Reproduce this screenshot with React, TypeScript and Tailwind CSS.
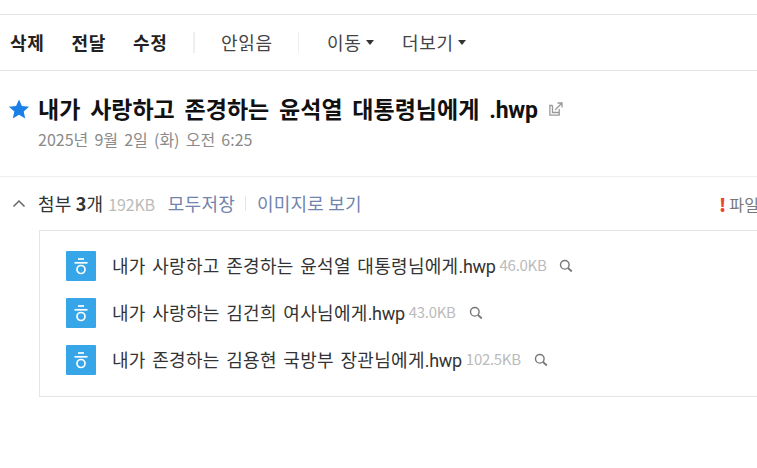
const font = { fontFamily: '"Noto Sans CJK KR", "Noto Sans", sans-serif' };
const latin = { fontFamily: 'Roboto, "Noto Sans", sans-serif' };

function Caret() {
  return <span className="ml-[4px] inline-block h-0 w-0 border-x-[4px] border-t-[5px] border-x-transparent border-t-[#333]" />;
}

function Search() {
  return (
    <svg width="14" height="14" viewBox="0 0 14 14" fill="none" stroke="#777" strokeWidth="1.4" className="block shrink-0">
      <circle cx="5.800" cy="5.800" r="4.300" />
      <path d="M9 9l3.800 3.500" strokeWidth="1.800" />
    </svg>
  );
}

function HwpIcon() {
  return (
    <div className="flex h-[30px] w-[30px] shrink-0 items-center justify-center rounded-[1px] bg-[#36a6e8]">
      <svg width="14" height="17" viewBox="0 0 14 17" fill="none" stroke="#fff" strokeWidth="1.700">
        <path d="M4 1h6" />
        <path d="M.5 4.800h13" />
        <circle cx="7" cy="11.500" r="4" />
      </svg>
    </div>
  );
}

const files = [
  { name: "내가 사랑하고 존경하는 윤석열 대통령님에게", size: "46.0KB" },
  { name: "내가 사랑하는 김건희 여사님에게", size: "43.0KB" },
  { name: "내가 존경하는 김용현 국방부 장관님에게", size: "102.5KB" },
];

export default function App() {
  return (
    <div className="h-[468px] w-[757px] overflow-hidden bg-white pt-[14px]" style={font}>
      <div className="flex h-[57px] items-center whitespace-nowrap border-y border-[#e5e5e5] pl-[10px] text-[18px] tracking-[0.7px]">
        <div className="flex w-[158px] gap-[27px] font-bold text-[#222]">
          <span>삭제</span>
          <span>전달</span>
          <span>수정</span>
        </div>
        <div className="ml-[25px] h-[21px] w-[2px] bg-[#eeeeee]" />
        <span className="ml-[26px] w-[52px] text-[#444]">안읽음</span>
        <div className="ml-[25px] h-[21px] w-px bg-[#eeeeee]" />
        <span className="ml-[28px] flex w-[46px] items-center text-[#444]">이동<Caret /></span>
        <span className="ml-[29px] flex items-center text-[#444]">더보기<Caret /></span>
      </div>

      <div className="h-[106px] border-b border-[#eeeeee] pl-[8px] pt-[22px]">
        <div className="flex h-[32px] items-center whitespace-nowrap">
          <svg width="22" height="22" viewBox="0 0 24 24" fill="#1a80e8" className="shrink-0">
            <path d="M12 1.500l3.200 7.200 7.800.8-5.900 5.200 1.700 7.700L12 18.400l-6.800 4 1.700-7.700L1 9.500l7.800-.8z" />
          </svg>
          <span className="ml-[8px] text-[23px] font-bold leading-[32px] text-[#111] [word-spacing:4.6px]">
            내가 사랑하고 존경하는 윤석열 대통령님에게{" "}
            <span className="tracking-[-0.2px]" style={latin}>.hwp</span>
          </span>
          <svg width="14" height="14" viewBox="0 0 14 14" fill="none" stroke="#999" strokeWidth="1.300" className="ml-[11px] shrink-0">
            <path d="M3.500 3.500H.9v9.600h9.300v-2.600" />
            <path d="M3.500 3.500V10.500H10.200V7" />
            <path d="M6 8l6.500-6.500M8.500 1h4.500v4.500" />
          </svg>
        </div>
        <div className="ml-[30px] mt-[4px] text-[16px] leading-[20px] text-[#8a8a8a] [word-spacing:2.6px]">
          2025년 9월 2일 (화) 오전 6:25
        </div>
      </div>

      <div className="flex h-[53px] items-center whitespace-nowrap pl-[12px] text-[18px] tracking-[0.2px]">
        <svg width="14" height="9" viewBox="0 0 14 9" fill="none" stroke="#666" strokeWidth="1.500" className="shrink-0">
          <path d="M1.500 7.500L7 2l5.500 5.500" />
        </svg>
        <span className="ml-[12px] text-[#333]">첨부 <b className="font-bold">3</b>개</span>
        <span className="ml-[5px] text-[16px] tracking-[-0.2px] text-[#bbbbbb]">192KB</span>
        <span className="ml-[13px] text-[#7284ad]">모두저장</span>
        <div className="ml-[10px] h-[15px] w-px bg-[#e5e5e5]" />
        <span className="ml-[11px] text-[#7284ad]">이미지로 보기</span>
        <span className="ml-auto flex w-[38px] shrink-0 items-center overflow-hidden text-[16px] text-[#777]">
          <b className="mr-[3px] text-[18px] font-black leading-none text-[#f0432c]">!</b>파일
        </span>
      </div>

      <div className="ml-[39px] flex h-[167px] flex-col gap-[17px] border-y border-l border-[#e5e5e5] pl-[26px] pt-[20px]">
        {files.map((f) => (
          <div key={f.name} className="flex h-[30px] items-center whitespace-nowrap">
            <HwpIcon />
            <span className="ml-[16px] pb-[1px] text-[18px] tracking-[0.3px] text-[#333] [word-spacing:2.2px]">
              {f.name}
              <span className="tracking-[-0.3px]" style={latin}>.hwp</span>
            </span>
            <span className="ml-[4px] pb-[1px] text-[15px] tracking-[-0.3px] text-[#bbbbbb]">{f.size}</span>
            <span className="ml-[13px] pb-[1px]"><Search /></span>
          </div>
        ))}
      </div>
    </div>
  );
}
